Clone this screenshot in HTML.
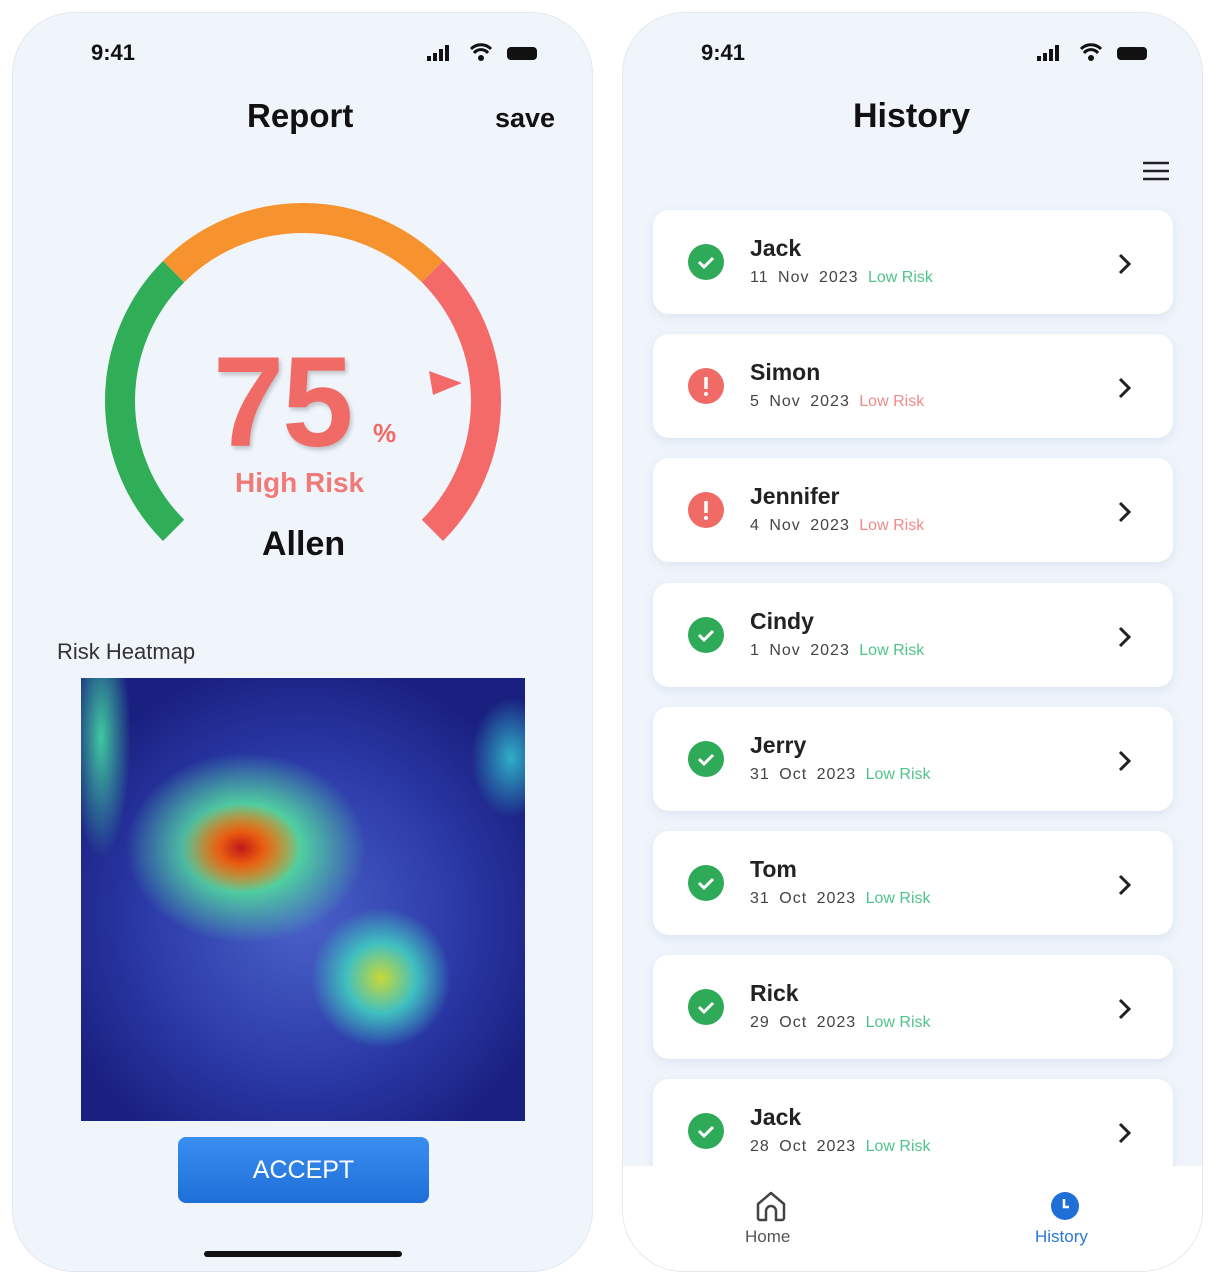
<!DOCTYPE html>
<html><head><meta charset="utf-8"><style>
*{margin:0;padding:0;box-sizing:border-box}
body{width:1226px;height:1288px;background:#fff;font-family:"Liberation Sans",sans-serif;position:relative;overflow:hidden}
.ph{position:absolute;top:12px;width:581px;height:1260px;border-radius:62px;background:#f0f5fb;border:1px solid #e4e8ee;overflow:hidden}
.a{position:absolute}
.t{font-weight:bold;color:#111}
.card{position:absolute;left:30px;width:520px;height:104px;background:#fff;border-radius:16px;box-shadow:0 3px 10px rgba(150,180,220,.25)}
.card .ic{position:absolute;left:35px;top:34px;width:36px;height:36px;border-radius:50%}
.card .nm{position:absolute;left:97px;top:25px;font-size:23px;font-weight:bold;color:#222}
.card .dt{position:absolute;left:97px;top:59px;font-size:16px;color:#444;letter-spacing:1px;word-spacing:4px}
.card .dt span{letter-spacing:0;word-spacing:0}
.g{color:#4fc48a}.r{color:#f08a8a}
.card svg.ch{position:absolute;right:40px;top:42px}
</style></head><body>
<div class="ph" style="left:12px">
 <div class="a t" style="left:78px;top:27px;font-size:22px">9:41</div>
 <svg class="a" style="left:414px;top:30px" width="140" height="22" viewBox="0 0 140 22">
  <rect x="0" y="13" width="4" height="5" fill="#111"/><rect x="6" y="10" width="4" height="8" fill="#111"/><rect x="12" y="6" width="4" height="12" fill="#111"/><rect x="18" y="2" width="4" height="16" fill="#111"/>
  <path d="M44 6a14 14 0 0 1 20 0M47 10a9 9 0 0 1 14 0" stroke="#111" stroke-width="3" fill="none"/><circle cx="54" cy="15" r="3" fill="#111"/>
  <rect x="80" y="4" width="30" height="13" rx="4" fill="#111"/>
 </svg>
 <div class="a t" style="left:234px;top:84px;font-size:33px">Report</div>
 <div class="a t" style="left:482px;top:90px;font-size:27px">save</div>
 <svg class="a" style="left:-12px;top:-12px" width="600" height="600">
  <g fill="none" stroke-width="30">
   <path d="M172.6 529.4A183 183 0 0 1 172.6 270.6" stroke="#2fae57"/>
   <path d="M172.6 270.6A183 183 0 0 1 431.4 270.6" stroke="#f7932e"/>
   <path d="M431.4 270.6A183 183 0 0 1 431.4 529.4" stroke="#f46a68"/>
  </g>
  <polygon points="428,370 461,382 432,394" fill="#f46a68"/>
 </svg>
 <div class="a" style="left:200px;top:316px;font-size:128px;font-weight:bold;color:#f06a66;letter-spacing:-2px;text-shadow:2px 3px 4px rgba(0,0,0,.2)">75</div>
 <div class="a" style="left:360px;top:405px;font-size:26px;font-weight:bold;color:#f06a66">%</div>
 <div class="a" style="left:222px;top:454px;font-size:28px;font-weight:bold;color:#f07a78">High Risk</div>
 <div class="a t" style="left:249px;top:512px;font-size:34px">Allen</div>
 <div class="a" style="left:44px;top:626px;font-size:22px;color:#333">Risk Heatmap</div>
 <div class="a" style="left:68px;top:665px;width:444px;height:443px;background:
  radial-gradient(ellipse 60px 45px at 160px 170px,#c01818 0%,#e85a10 35%,transparent 100%),
  radial-gradient(ellipse 120px 95px at 165px 170px,#e8d820 0%,#50d0a0 45%,transparent 100%),
  radial-gradient(ellipse 70px 70px at 300px 300px,#c8d838 0%,#40c0c0 50%,transparent 100%),
  radial-gradient(ellipse 30px 120px at 20px 60px,#40c8a0 0%,transparent 100%),
  radial-gradient(ellipse 40px 60px at 430px 80px,#30b0c8 0%,transparent 100%),
  radial-gradient(ellipse 260px 260px at 220px 240px,#4a62c8 0%,#2b3aa8 60%,#1a2080 100%)"></div>
 <div class="a" style="left:165px;top:1124px;width:251px;height:66px;border-radius:8px;background:linear-gradient(#3a8ef0,#1e6fd8);color:#fff;font-size:25px;text-align:center;line-height:66px">ACCEPT</div>
 <div class="a" style="left:191px;top:1238px;width:198px;height:6px;border-radius:3px;background:#111"></div>
</div>

<div class="ph" style="left:622px">
 <div class="a t" style="left:78px;top:27px;font-size:22px">9:41</div>
 <svg class="a" style="left:414px;top:30px" width="140" height="22" viewBox="0 0 140 22">
  <rect x="0" y="13" width="4" height="5" fill="#111"/><rect x="6" y="10" width="4" height="8" fill="#111"/><rect x="12" y="6" width="4" height="12" fill="#111"/><rect x="18" y="2" width="4" height="16" fill="#111"/>
  <path d="M44 6a14 14 0 0 1 20 0M47 10a9 9 0 0 1 14 0" stroke="#111" stroke-width="3" fill="none"/><circle cx="54" cy="15" r="3" fill="#111"/>
  <rect x="80" y="4" width="30" height="13" rx="4" fill="#111"/>
 </svg>
 <div class="a t" style="left:230px;top:84px;font-size:34px">History</div>
 <svg class="a" style="left:518px;top:146px" width="30" height="24"><path d="M2 4H28M2 12H28M2 20H28" stroke="#222" stroke-width="2.5"/></svg>

 <div class="card" style="top:197px"><div class="ic" style="background:#2faa58"><svg width="36" height="36"><path d="M11 18l5 5 9-9" stroke="#fff" stroke-width="3" fill="none"/></svg></div><div class="nm">Jack</div><div class="dt">11 Nov 2023 <span class="g">Low Risk</span></div><svg class="ch" width="16" height="24"><path d="M3 3l9 9-9 9" stroke="#222" stroke-width="3" fill="none"/></svg></div>
 <div class="card" style="top:321px"><div class="ic" style="background:#f06a66"><svg width="36" height="36"><path d="M18 9v12" stroke="#fff" stroke-width="3.5"/><circle cx="18" cy="26" r="2" fill="#fff"/></svg></div><div class="nm">Simon</div><div class="dt">5 Nov 2023 <span class="r">Low Risk</span></div><svg class="ch" width="16" height="24"><path d="M3 3l9 9-9 9" stroke="#222" stroke-width="3" fill="none"/></svg></div>
 <div class="card" style="top:445px"><div class="ic" style="background:#f06a66"><svg width="36" height="36"><path d="M18 9v12" stroke="#fff" stroke-width="3.5"/><circle cx="18" cy="26" r="2" fill="#fff"/></svg></div><div class="nm">Jennifer</div><div class="dt">4 Nov 2023 <span class="r">Low Risk</span></div><svg class="ch" width="16" height="24"><path d="M3 3l9 9-9 9" stroke="#222" stroke-width="3" fill="none"/></svg></div>
 <div class="card" style="top:570px"><div class="ic" style="background:#2faa58"><svg width="36" height="36"><path d="M11 18l5 5 9-9" stroke="#fff" stroke-width="3" fill="none"/></svg></div><div class="nm">Cindy</div><div class="dt">1 Nov 2023 <span class="g">Low Risk</span></div><svg class="ch" width="16" height="24"><path d="M3 3l9 9-9 9" stroke="#222" stroke-width="3" fill="none"/></svg></div>
 <div class="card" style="top:694px"><div class="ic" style="background:#2faa58"><svg width="36" height="36"><path d="M11 18l5 5 9-9" stroke="#fff" stroke-width="3" fill="none"/></svg></div><div class="nm">Jerry</div><div class="dt">31 Oct 2023 <span class="g">Low Risk</span></div><svg class="ch" width="16" height="24"><path d="M3 3l9 9-9 9" stroke="#222" stroke-width="3" fill="none"/></svg></div>
 <div class="card" style="top:818px"><div class="ic" style="background:#2faa58"><svg width="36" height="36"><path d="M11 18l5 5 9-9" stroke="#fff" stroke-width="3" fill="none"/></svg></div><div class="nm">Tom</div><div class="dt">31 Oct 2023 <span class="g">Low Risk</span></div><svg class="ch" width="16" height="24"><path d="M3 3l9 9-9 9" stroke="#222" stroke-width="3" fill="none"/></svg></div>
 <div class="card" style="top:942px"><div class="ic" style="background:#2faa58"><svg width="36" height="36"><path d="M11 18l5 5 9-9" stroke="#fff" stroke-width="3" fill="none"/></svg></div><div class="nm">Rick</div><div class="dt">29 Oct 2023 <span class="g">Low Risk</span></div><svg class="ch" width="16" height="24"><path d="M3 3l9 9-9 9" stroke="#222" stroke-width="3" fill="none"/></svg></div>
 <div class="card" style="top:1066px"><div class="ic" style="background:#2faa58"><svg width="36" height="36"><path d="M11 18l5 5 9-9" stroke="#fff" stroke-width="3" fill="none"/></svg></div><div class="nm">Jack</div><div class="dt">28 Oct 2023 <span class="g">Low Risk</span></div><svg class="ch" width="16" height="24"><path d="M3 3l9 9-9 9" stroke="#222" stroke-width="3" fill="none"/></svg></div>

 <div class="a" style="left:0;top:1153px;width:581px;height:110px;background:#fff"></div>
 <svg class="a" style="left:131px;top:1176px" width="34" height="34"><path d="M4 15L17 4l13 11v14a2 2 0 0 1-2 2h-6v-9a5 5 0 0 0-10 0v9H6a2 2 0 0 1-2-2z" stroke="#444" stroke-width="2.5" fill="none" stroke-linejoin="round"/></svg>
 <div class="a" style="left:122px;top:1214px;font-size:17px;color:#555">Home</div>
 <svg class="a" style="left:427px;top:1178px" width="30" height="30"><circle cx="15" cy="15" r="14" fill="#1f6fd8"/><path d="M14 8v8h5" stroke="#fff" stroke-width="2.5" fill="none"/></svg>
 <div class="a" style="left:412px;top:1214px;font-size:17px;color:#2a78d8">History</div>
</div>
</body></html>
